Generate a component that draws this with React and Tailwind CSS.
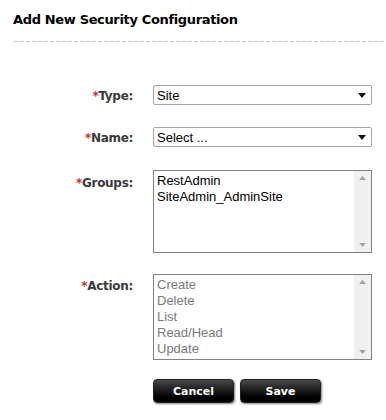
import React from "react";

const groups = ["RestAdmin", "SiteAdmin_AdminSite"];
const actions = ["Create", "Delete", "List", "Read/Head", "Update"];

function Label({ children }) {
  return (
    <div className="text-right font-bold text-[12px] leading-[14px] text-[#3b3b3b] font-['DejaVu_Sans',sans-serif] tracking-[-0.3px]">
      <span className="text-[#d42a2a]">*</span>
      {children}
    </div>
  );
}

function Select({ value }) {
  return (
    <div className="h-[20px] border border-[#a6a6a6] rounded-[2px] bg-white flex items-center justify-between pl-[3px] pr-[5px]">
      <span className="text-[13px] text-black leading-none">{value}</span>
      <svg width="8" height="5" viewBox="0 0 8 5">
        <path d="M0 0h8L4 5z" fill="#111" />
      </svg>
    </div>
  );
}

function ListBox({ items, height, muted }) {
  return (
    <div className={`border border-[#828282] bg-white flex ${height}`}>
      <div className="flex-1 pl-[3px] pt-[2px]">
        {items.map((it) => (
          <div
            key={it}
            className={`text-[13px] leading-[16px] ${muted ? "text-[#7a7a7a]" : "text-black"}`}
          >
            {it}
          </div>
        ))}
      </div>
      <div className="w-[17px] bg-[#f0f0f0] flex flex-col justify-between items-center py-[5px]">
        <svg width="7" height="4" viewBox="0 0 7 4">
          <path d="M3.5 0L7 4H0z" fill="#a3a3a3" />
        </svg>
        <svg width="7" height="4" viewBox="0 0 7 4">
          <path d="M0 0h7L3.5 4z" fill="#a3a3a3" />
        </svg>
      </div>
    </div>
  );
}

function Button({ children }) {
  return (
    <button className="w-[81px] h-[24px] rounded-[4px] bg-gradient-to-b from-[#4a4a4a] via-[#1a1a1a] to-[#000] text-white font-bold text-[11px] leading-none font-['DejaVu_Sans',sans-serif] shadow-[1px_1px_2px_rgba(0,0,0,0.5)] border border-[#222]">
      {children}
    </button>
  );
}

export default function App() {
  return (
    <div className="w-[386px] h-[420px] bg-white font-['Liberation_Sans',Arial,sans-serif] overflow-hidden">
      <div className="pt-[12px] pl-[13px]">
        <h1 className="text-[13px] font-bold text-black font-['DejaVu_Sans',sans-serif] tracking-[-0.35px] leading-[16px]">
          Add New Security Configuration
        </h1>
      </div>
      <div className="mt-[13px] ml-[14px] h-px bg-[repeating-linear-gradient(90deg,#c6c6c6_0px,#c6c6c6_4px,transparent_4px,transparent_6px)]" />

      <div className="mt-[43px] grid grid-cols-[133px_219px] gap-x-[20px] items-start">
        <div className="pt-[4px]"><Label>Type:</Label></div>
        <Select value="Site" />

        <div className="pt-[4px] mt-[22px]"><Label>Name:</Label></div>
        <div className="mt-[22px]"><Select value="Select ..." /></div>

        <div className="pt-[6px] mt-[23px]"><Label>Groups:</Label></div>
        <div className="mt-[23px]"><ListBox items={groups} height="h-[83px]" /></div>

        <div className="pt-[5px] mt-[21px]"><Label>Action:</Label></div>
        <div className="mt-[21px]"><ListBox items={actions} height="h-[86px]" muted /></div>

        <div />
        <div className="mt-[19px] flex gap-[6px]">
          <Button>Cancel</Button>
          <Button>Save</Button>
        </div>
      </div>
    </div>
  );
}
